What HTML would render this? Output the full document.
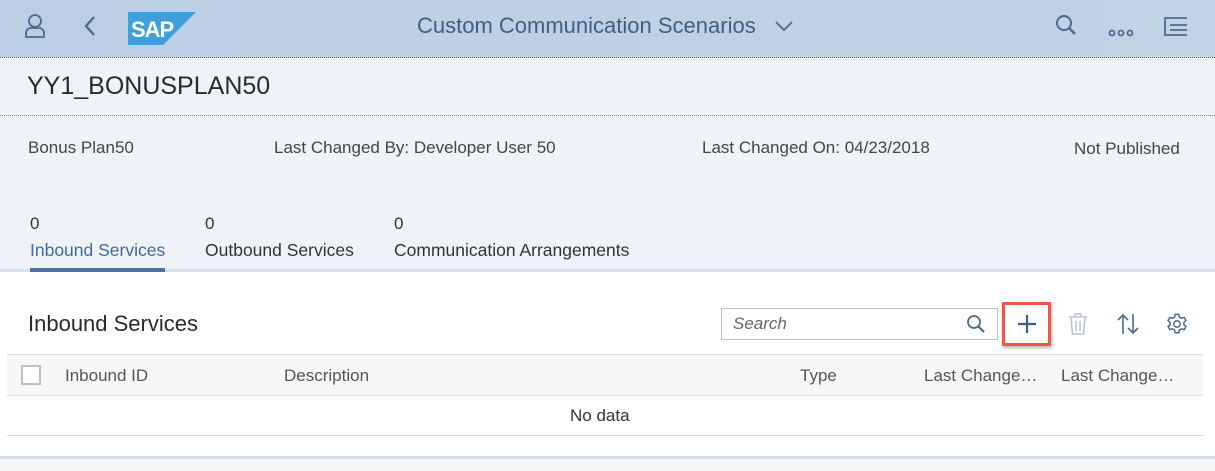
<!DOCTYPE html>
<html><head><meta charset="utf-8"><style>
*{margin:0;padding:0;box-sizing:border-box}
body{width:1215px;height:471px;overflow:hidden;font-family:"Liberation Sans",Arial,sans-serif;background:#fff;position:relative;color:#333}
.a{position:absolute;white-space:nowrap}
</style></head><body>
<div class="a" style="left:0;top:0;width:1215px;height:57px;background:linear-gradient(90deg,#bccee3,#c3d3e6)"></div>
<div class="a" style="left:0;top:57px;width:1215px;height:0;border-top:1px dotted #555"></div>
<div class="a" style="left:0;top:58px;width:1215px;height:212px;background:#eff3f8"></div>
<div class="a" style="left:0;top:115px;width:1215px;border-top:1px dotted #888"></div>
<svg class="a" style="left:24px;top:13px" width="22" height="26" viewBox="0 0 22 26" fill="none" stroke="#4b6a8e" stroke-width="1.8"><circle cx="11" cy="8" r="6"/><path d="M2 24v-4a5 5 0 0 1 5-5h8a5 5 0 0 1 5 5v4z"/></svg>
<svg class="a" style="left:83px;top:15px" width="14" height="22" viewBox="0 0 14 22" fill="none" stroke="#4b6a8e" stroke-width="2.4"><path d="M11 2 3 11l8 9"/></svg>
<svg class="a" style="left:128px;top:12px" width="68" height="33" viewBox="0 0 68 33"><polygon points="0,0 68,0 35,33 0,33" fill="#3f9fd9"/><text x="3" y="25" font-family="Liberation Sans" font-weight="bold" font-size="22" fill="#fff" letter-spacing="-1">SAP</text></svg>
<div class="a" style="left:417px;top:13px;font-size:22px;color:#3e5f84">Custom Communication Scenarios</div>
<svg class="a" style="left:774px;top:20px" width="20" height="12" viewBox="0 0 20 12" fill="none" stroke="#4b6a8e" stroke-width="1.8"><path d="M2 2l8 8 8-8"/></svg>
<svg class="a" style="left:1055px;top:14px" width="22" height="22" viewBox="0 0 22 22" fill="none" stroke="#4b6a8e" stroke-width="2"><circle cx="9" cy="9" r="7"/><path d="M14 14l6 6" stroke-width="2.6"/></svg>
<svg class="a" style="left:1108px;top:29px" width="26" height="8" viewBox="0 0 26 8" fill="none" stroke="#4b6a8e" stroke-width="1.8"><circle cx="4" cy="4" r="2.5"/><circle cx="13" cy="4" r="2.5"/><circle cx="22" cy="4" r="2.5"/></svg>
<svg class="a" style="left:1163px;top:16px" width="26" height="20" viewBox="0 0 26 20" fill="none" stroke="#4b6a8e" stroke-width="1.8"><path d="M24 2H2v17h22M7 9h17M7 14h17"/></svg>
<div class="a" style="left:27px;top:72px;font-size:25px;color:#2a2a2a">YY1_BONUSPLAN50</div>
<div class="a" style="left:28px;top:138px;font-size:17px;color:#444">Bonus Plan50</div>
<div class="a" style="left:274px;top:138px;font-size:17px;color:#444">Last Changed By: Developer User 50</div>
<div class="a" style="left:702px;top:138px;font-size:17px;color:#444">Last Changed On: 04/23/2018</div>
<div class="a" style="left:1074px;top:139px;font-size:17px;color:#444">Not Published</div>
<div class="a" style="left:30px;top:214px;font-size:17px;color:#333">0</div>
<div class="a" style="left:30px;top:240px;font-size:17.5px;color:#3f6a9c">Inbound Services</div>
<div class="a" style="left:205px;top:214px;font-size:17px;color:#333">0</div>
<div class="a" style="left:205px;top:240px;font-size:17.5px;color:#333">Outbound Services</div>
<div class="a" style="left:394px;top:214px;font-size:17px;color:#333">0</div>
<div class="a" style="left:394px;top:240px;font-size:17.5px;color:#333">Communication Arrangements</div>
<div class="a" style="left:0;top:269px;width:1215px;height:3px;background:#d4e0ec"></div>
<div class="a" style="left:30px;top:268px;width:135px;height:4px;background:#4a73a3"></div>
<div class="a" style="left:28px;top:311px;font-size:22px;color:#2a2a2a">Inbound Services</div>
<div class="a" style="left:721px;top:308px;width:277px;height:32px;border:1px solid #bfbfbf;background:#fff"></div>
<div class="a" style="left:733px;top:314px;font-size:17px;color:#666;font-style:italic">Search</div>
<svg class="a" style="left:966px;top:314px" width="20" height="20" viewBox="0 0 20 20" fill="none" stroke="#4b6a8e" stroke-width="1.8"><circle cx="8" cy="8" r="6"/><path d="M12.5 12.5l5.5 5.5" stroke-width="2.2"/></svg>
<div class="a" style="left:1002px;top:302px;width:49px;height:44px;border:3px solid #f05545;box-shadow:1px 2px 3px rgba(0,0,0,.3)"></div>
<svg class="a" style="left:1016px;top:313px" width="22" height="22" viewBox="0 0 22 22" stroke="#3e5f84" stroke-width="2.2"><path d="M11 2v18M2 11h18"/></svg>
<svg class="a" style="left:1068px;top:313px" width="20" height="22" viewBox="0 0 20 22" fill="none" stroke="#b8c6d6" stroke-width="1.6"><path d="M1 4h18M7 4V1h6v3M3 4l1.5 17h11L17 4M8 8v10M12 8v10"/></svg>
<svg class="a" style="left:1116px;top:313px" width="24" height="22" viewBox="0 0 24 22" fill="none" stroke="#4b6a8e" stroke-width="1.6"><path d="M7 21V2M2 7l5-5 5 5M17 1v19M12 15l5 5 5-5"/></svg>
<svg class="a" style="left:1166px;top:313px" width="22" height="22" viewBox="0 0 24 24" fill="none" stroke="#4b6a8e" stroke-width="1.6"><circle cx="12" cy="12" r="3.5"/><path d="M10 1.5h4l.6 3 2.3 1.3 2.9-1 2 3.4-2.3 2v2.6l2.3 2-2 3.4-2.9-1-2.3 1.3-.6 3h-4l-.6-3-2.3-1.3-2.9 1-2-3.4 2.3-2v-2.6l-2.3-2 2-3.4 2.9 1 2.3-1.3z"/></svg>
<div class="a" style="left:7px;top:354px;width:1196px;height:42px;background:#f7f7f7;border-top:1px solid #ddd;border-bottom:1px solid #ddd"></div>
<div class="a" style="left:21px;top:365px;width:20px;height:20px;border:2px solid #bfbfbf;background:#fff"></div>
<div class="a" style="left:65px;top:366px;font-size:17px;color:#555">Inbound ID</div>
<div class="a" style="left:284px;top:366px;font-size:17px;color:#555">Description</div>
<div class="a" style="left:800px;top:366px;font-size:17px;color:#555">Type</div>
<div class="a" style="left:924px;top:366px;font-size:17px;color:#555">Last Change…</div>
<div class="a" style="left:1061px;top:366px;font-size:17px;color:#555">Last Change…</div>
<div class="a" style="left:570px;top:406px;font-size:17px;color:#333">No data</div>
<div class="a" style="left:7px;top:435px;width:1196px;border-top:1px solid #ddd"></div>
<div class="a" style="left:0;top:456px;width:1215px;height:3px;background:#d4e0ec"></div>
<div class="a" style="left:0;top:459px;width:1215px;height:12px;background:#f7f7f7"></div>
</body></html>
